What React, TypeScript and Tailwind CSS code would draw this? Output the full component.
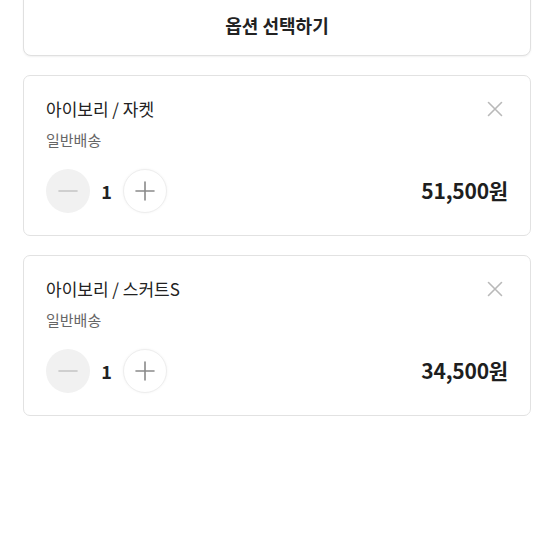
import React from 'react';

interface OptionItem {
  name: string;
  delivery: string;
  qty: number;
  price: string;
}

const items: OptionItem[] = [
  { name: '아이보리 / 자켓', delivery: '일반배송', qty: 1, price: '51,500원' },
  { name: '아이보리 / 스커트S', delivery: '일반배송', qty: 1, price: '34,500원' },
];

const OptionCard: React.FC<{ item: OptionItem }> = ({ item }) => {
  return (
    <div className="rounded-[7px] border border-[#e2e2e2] bg-white px-[22px] pt-[21px] pb-[22px]">
      <div className="flex items-center justify-between">
        <span className="text-[17px] leading-[24px] text-[#222]">{item.name}</span>
        <svg width="16" height="16" viewBox="0 0 16 16" className="mr-[5px]">
          <path d="M1.5 1.5L14.5 14.5M14.5 1.5L1.5 14.5" stroke="#b9b9b9" strokeWidth="1.6" strokeLinecap="round" />
        </svg>
      </div>
      <div className="mt-[8px] text-[15px] leading-[22px] text-[#666]">{item.delivery}</div>
      <div className="mt-[18px] flex items-center justify-between">
        <div className="flex items-center">
          <button className="flex h-[44px] w-[44px] items-center justify-center rounded-full bg-[#f1f1f1]">
            <svg width="20" height="20" viewBox="0 0 20 20">
              <path d="M1 10H19" stroke="#c4c4c4" strokeWidth="1.6" strokeLinecap="round" />
            </svg>
          </button>
          <span className="w-[33px] text-center text-[18px] font-bold text-[#222]">{item.qty}</span>
          <button className="flex h-[44px] w-[44px] items-center justify-center rounded-full border border-[#eeeeee] bg-white shadow-[0_0_3px_rgba(0,0,0,0.05)]">
            <svg width="20" height="20" viewBox="0 0 20 20">
              <path d="M1 10H19M10 1V19" stroke="#8a8a8a" strokeWidth="1.6" strokeLinecap="round" />
            </svg>
          </button>
        </div>
        <span className="text-[21px] font-bold text-[#1e1e1e] tracking-[-0.2px]">{item.price}</span>
      </div>
    </div>
  );
};

const App: React.FC = () => {
  return (
    <div
      className="min-h-[555px] w-[555px] overflow-hidden bg-white"
      style={{ fontFamily: '"Noto Sans CJK KR", "Noto Sans", sans-serif' }}
    >
      <div className="ml-[23px] mr-[24px] flex flex-col gap-[19px]">
        <button className="-mt-[10px] flex h-[66px] items-center justify-center rounded-[8px] border border-[#e0e0e0] bg-white shadow-[0_1px_2px_rgba(0,0,0,0.06)]">
          <span className="mt-[4px] text-[18px] font-semibold text-[#222]">옵션 선택하기</span>
        </button>
        {items.map((item, index) => (
          <OptionCard key={index} item={item} />
        ))}
      </div>
    </div>
  );
};

export default App;
